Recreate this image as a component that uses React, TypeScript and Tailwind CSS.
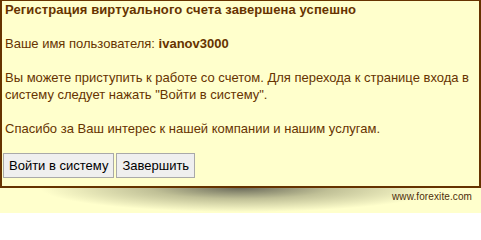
export default function App() {
  return (
    <div className="w-[481px] h-[213px] bg-[#ffffcc] font-['Liberation_Sans',Arial,sans-serif] text-[13px] leading-[17px] text-[#663300] overflow-hidden">
      <div className="h-[188px] border-2 border-t-[1px] border-[#663300] px-[3px]">
        <div className="font-bold tracking-[0.1px]">Регистрация виртуального счета завершена успешно</div>
        <div className="h-[17px]" />
        <div>
          Ваше имя пользователя: <span className="font-bold">ivanov3000</span>
        </div>
        <div className="h-[17px]" />
        <div>
          Вы можете приступить к работе со счетом. Для перехода к странице входа в систему следует
          нажать "Войти в систему".
        </div>
        <div className="h-[17px]" />
        <div>Спасибо за Ваш интерес к нашей компании и нашим услугам.</div>
        <div className="h-[16px]" />
        <div className="flex gap-[2px] -ml-[2px]">
          <button className="h-[25px] px-[5px] bg-[#efefef] border border-[#a9a9a9] text-black text-[13px]">
            Войти в систему
          </button>
          <button className="h-[25px] px-[5px] bg-[#efefef] border border-[#a9a9a9] text-black text-[13px]">
            Завершить
          </button>
        </div>
      </div>
      <div className="relative h-[25px]">
        <div className="absolute left-[30px] right-[30px] top-0 h-[25px] bg-[radial-gradient(ellipse_200px_24px_at_50%_0%,rgba(100,100,85,0.95),rgba(150,150,115,0.6)_45%,rgba(255,255,204,0)_100%)]" />
        <div className="relative text-right pr-[9px] pt-[3px] text-[10px] leading-[12px] tracking-[0.1px] text-[#4d2e0a]">
          www.forexite.com
        </div>
      </div>
    </div>
  );
}
